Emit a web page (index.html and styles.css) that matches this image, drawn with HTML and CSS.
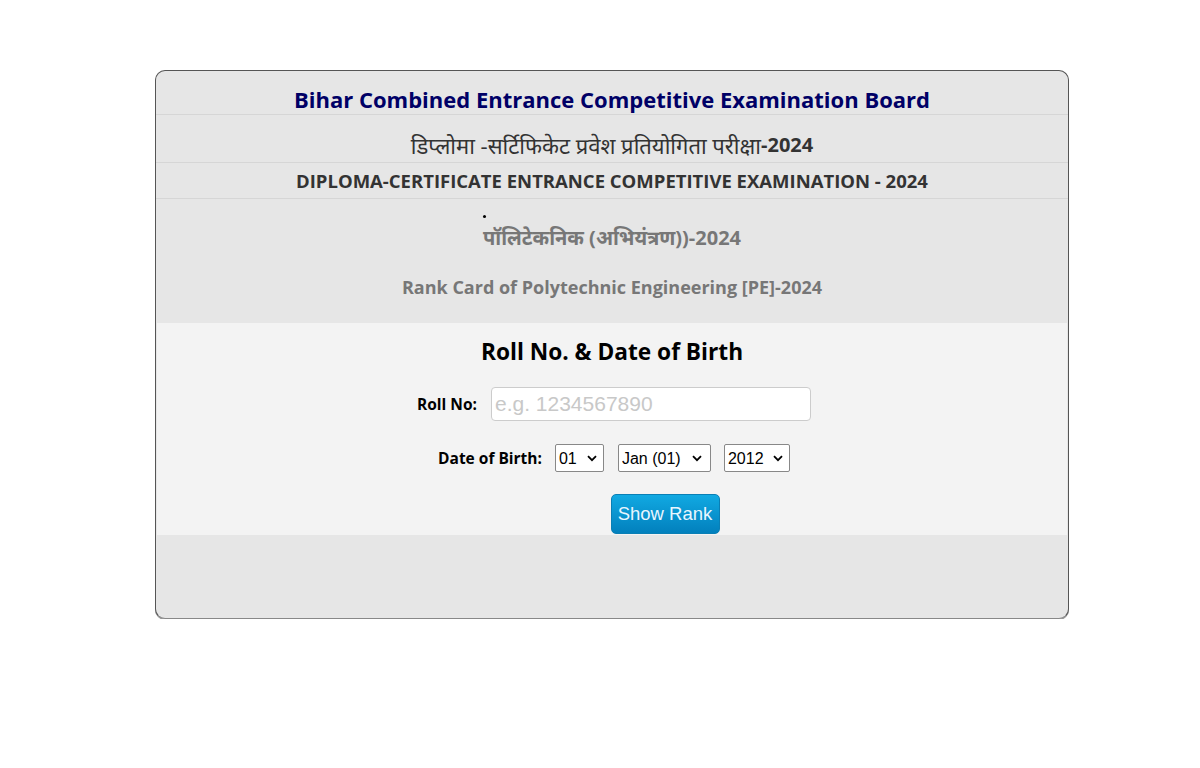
FILE: index.html
```html
<!DOCTYPE html>
<html>
<head>
<meta charset="utf-8">
<link rel="stylesheet" href="styles.css">
</head>
<body>
<div class="card">
  <div class="row r1">Bihar Combined Entrance Competitive Examination Board</div>
  <div class="row r2"><span class="deva">डिप्लोमा -सर्टिफिकेट प्रवेश प्रतियोगिता परीक्षा</span>-2024</div>
  <div class="row r3">DIPLOMA-CERTIFICATE ENTRANCE COMPETITIVE EXAMINATION - 2024</div>
  <div class="row r4">
    <div class="dotline"><span class="dot"></span></div>
    <div class="hin">पॉलिटेकनिक (अभियंत्रण))-2024</div>
    <div class="rank">Rank Card of Polytechnic Engineering [PE]-2024</div>
  </div>
  <div class="form">
    <h2 class="ftitle">Roll No. &amp; Date of Birth</h2>
    <div class="line roll">
      <label class="lbl">Roll No:</label>
      <input class="inp" type="text" placeholder="e.g. 1234567890">
    </div>
    <div class="line dob">
      <label class="lbl">Date of Birth:</label>
      <span class="selwrap s1">
        <select class="sel"><option>01</option></select>
        <svg class="chev" width="10" height="7" viewBox="0 0 10 7"><path d="M1 1.2 L5 5.2 L9 1.2" fill="none" stroke="#000" stroke-width="1.8"/></svg>
      </span>
      <span class="selwrap s2">
        <select class="sel"><option>Jan (01)</option></select>
        <svg class="chev" width="10" height="7" viewBox="0 0 10 7"><path d="M1 1.2 L5 5.2 L9 1.2" fill="none" stroke="#000" stroke-width="1.8"/></svg>
      </span>
      <span class="selwrap s3">
        <select class="sel"><option>2012</option></select>
        <svg class="chev" width="10" height="7" viewBox="0 0 10 7"><path d="M1 1.2 L5 5.2 L9 1.2" fill="none" stroke="#000" stroke-width="1.8"/></svg>
      </span>
    </div>
    <div class="line btnline">
      <button class="btn">Show Rank</button>
    </div>
  </div>
  <div class="foot"></div>
</div>
</body>
</html>
```
FILE: styles.css
```css
html, body {
  margin: 0;
  padding: 0;
  background: #fff;
}
body {
  padding-top: 70px;
  font-family: "Open Sans", "Noto Sans", "Noto Sans Devanagari", sans-serif;
}
.card {
  width: 912px;
  margin-left: 155px;
  height: 547px;
  border: 1px solid #555;
  border-bottom-color: #888;
  border-radius: 10px;
  background: #e6e6e6;
  box-shadow: 0 1px 0 #999;
  overflow: hidden;
  display: flex;
  flex-direction: column;
}
.row {
  text-align: center;
  font-weight: bold;
  border-bottom: 1px solid #d6d6d6;
  display: flex;
  align-items: center;
  justify-content: center;
  flex-shrink: 0;
}
.r1 {
  color: #000066;
  font-size: 22px;
  padding-top: 14px;
  height: 29px;
  align-items: flex-start;
  line-height: 28px;
}
.r2 {
  color: #333;
  font-size: 20px;
  padding-top: 12px;
  height: 35px;
}
.deva {
  font-weight: normal;
  font-size: 22px;
}
.r3 {
  height: 35px;
  color: #333;
  font-size: 18.5px;
}
.r4 {
  height: 124px;
  border-bottom: none;
  flex-direction: column;
  justify-content: flex-start;
  color: #777;
}
.dotline {
  width: 100%;
  height: 18px;
  position: relative;
}
.dot {
  position: absolute;
  left: 327px;
  top: 16px;
  width: 3px;
  height: 3px;
  background: #000;
  border-radius: 50%;
}
.hin {
  font-size: 20px;
  line-height: 28px;
  margin-top: 7px;
}
.rank {
  font-size: 18px;
  line-height: 24px;
  margin-top: 23px;
}
.form {
  margin: 0 1px;
  height: 212px;
  background: #f3f3f3;
  display: flex;
  flex-direction: column;
  align-items: center;
  flex-shrink: 0;
}
.ftitle {
  margin: 15px 0 0;
  font-size: 22.7px;
  line-height: 28px;
  color: #000;
  font-weight: bold;
}
.line {
  display: flex;
  align-items: center;
  justify-content: center;
}
.lbl {
  font-weight: bold;
  font-size: 15.5px;
  color: #000;
}
.roll {
  margin-top: 21px;
  margin-left: 4px;
}
.roll .lbl {
  margin-right: 14px;
}
.inp {
  width: 320px;
  height: 34px;
  box-sizing: border-box;
  border: 1px solid #ccc;
  border-radius: 4px;
  background: #fff;
  font-family: "Liberation Sans", Arial, sans-serif;
  font-size: 21px;
  padding: 0 3px;
}
.inp::placeholder {
  color: #c8c8c8;
}
.dob {
  margin-top: 23px;
  margin-left: 4px;
}
.dob .lbl {
  margin-right: 13px;
}
.selwrap {
  position: relative;
  display: block;
  height: 28px;
  margin-right: 14px;
}
.sel {
  width: 100%;
  height: 28px;
  box-sizing: border-box;
  border: 1px solid #888;
  border-radius: 2px;
  background: #fff;
  font-family: "Liberation Sans", Arial, sans-serif;
  font-size: 16px;
  color: #000;
  padding: 0 3px;
  appearance: none;
  -webkit-appearance: none;
}
.chev {
  position: absolute;
  right: 7px;
  top: 11px;
  pointer-events: none;
}
.s1 { width: 49px; }
.s2 { width: 93px; margin-right: 13px; }
.s2 .chev { right: 9px; }
.s3 { width: 66px; margin-right: 0; }
.btnline {
  margin-top: 22px;
  margin-left: 106px;
}
.btn {
  width: 109px;
  height: 40px;
  border: 1px solid #0a7fb5;
  border-radius: 5px;
  background: linear-gradient(#11a9e2, #0280bd);
  color: #e8f6ff;
  font-family: "Liberation Sans", Arial, sans-serif;
  font-size: 18.5px;
  padding: 0;
}
.foot {
  flex: 1;
}
```
